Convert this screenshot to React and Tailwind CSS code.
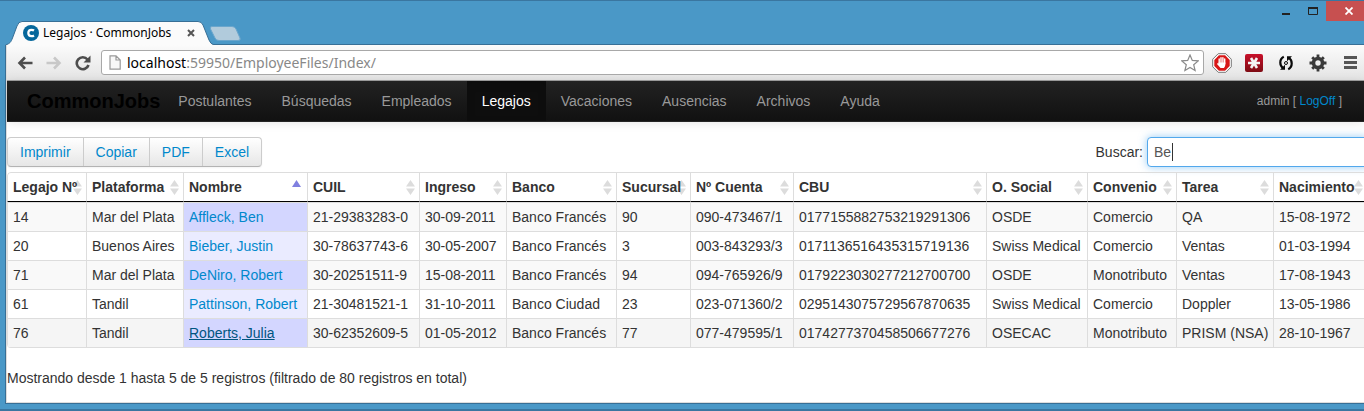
import { useState } from "react";

const columns = [
  { title: "Legajo Nº", width: "w-[79px]" },
  { title: "Plataforma", width: "w-[97px]" },
  { title: "Nombre", width: "w-[124px]", sorted: true },
  { title: "CUIL", width: "w-[112px]" },
  { title: "Ingreso", width: "w-[87px]" },
  { title: "Banco", width: "w-[110px]" },
  { title: "Sucursal", width: "w-[74px]" },
  { title: "Nº Cuenta", width: "w-[103px]" },
  { title: "CBU", width: "w-[193px]" },
  { title: "O. Social", width: "w-[101px]" },
  { title: "Convenio", width: "w-[89px]" },
  { title: "Tarea", width: "w-[97px]" },
  { title: "Nacimiento", width: "w-auto" },
];

const rows = [
  ["14", "Mar del Plata", "Affleck, Ben", "21-29383283-0", "30-09-2011", "Banco Francés", "90", "090-473467/1", "0177155882753219291306", "OSDE", "Comercio", "QA", "15-08-1972"],
  ["20", "Buenos Aires", "Bieber, Justin", "30-78637743-6", "30-05-2007", "Banco Francés", "3", "003-843293/3", "0171136516435315719136", "Swiss Medical", "Comercio", "Ventas", "01-03-1994"],
  ["71", "Mar del Plata", "DeNiro, Robert", "30-20251511-9", "15-08-2011", "Banco Francés", "94", "094-765926/9", "0179223030277212700700", "OSDE", "Monotributo", "Ventas", "17-08-1943"],
  ["61", "Tandil", "Pattinson, Robert", "21-30481521-1", "31-10-2011", "Banco Ciudad", "23", "023-071360/2", "0295143075729567870635", "Swiss Medical", "Comercio", "Doppler", "13-05-1986"],
  ["76", "Tandil", "Roberts, Julia", "30-62352609-5", "01-05-2012", "Banco Francés", "77", "077-479595/1", "0174277370458506677276", "OSECAC", "Monotributo", "PRISM (NSA)", "28-10-1967"],
];

const navItems = ["Postulantes", "Búsquedas", "Empleados", "Legajos", "Vacaciones", "Ausencias", "Archivos", "Ayuda"];

function TabStrip() {
  return (
    <div className="relative h-[45px] border-t border-[#3a76a0]">
      <div className="absolute bottom-0 left-[6px] right-0 h-px bg-[#376f96]" />
      <svg className="absolute left-0 top-[19px] h-[25px] w-[250px]" viewBox="0 0 250 25" aria-hidden="true">
        <path d="M5.500 25 C10 23.500 11 22 12.500 18 L17 6 Q18.500 1.500 22 1.500 H198 Q201.500 1.500 203 5 L209 20 Q210.500 24 214 25" fill="#fbfbfb" stroke="#376f96" />
        <path d="M212 6.500 H232 Q235 6.500 236 9 L240 18 Q241 20.500 238 20.500 H219 Q216 20.500 215 18 L210.500 9 Q209.500 6.500 212 6.500 Z" fill="#b1cbdc" stroke="#6ba6cc" />
      </svg>
      <div className="absolute left-[23px] top-[23px] flex h-[18px] w-44 items-center gap-1">
        <svg className="size-4 shrink-0" viewBox="0 0 16 16" aria-hidden="true">
          <circle cx="8" cy="8" r="8" fill="#05679b" />
          <path d="M11 5.500 Q10 4.800 8.500 4.800 Q5.300 4.800 5.300 8 Q5.300 11.200 8.500 11.200 Q10 11.200 11 10.500" fill="none" stroke="#fff" strokeWidth="2.200" />
        </svg>
        <span className="grow whitespace-nowrap font-['Noto_Sans',sans-serif] text-xs text-black">Legajos · CommonJobs</span>
        <button type="button" aria-label="Cerrar pestaña" className="mr-1">
          <svg className="size-2" viewBox="0 0 8 8" aria-hidden="true">
            <path d="M1 1 L7 7 M7 1 L1 7" stroke="#555" strokeWidth="2" />
          </svg>
        </button>
      </div>
      <div className="absolute right-0 top-0 flex h-5 items-center">
        <button type="button" aria-label="Minimizar" className="flex w-[27px] justify-center">
          <svg className="h-3 w-2" viewBox="0 0 8 12" aria-hidden="true"><path d="M0 9 H8" stroke="#222" strokeWidth="2" /></svg>
        </button>
        <button type="button" aria-label="Maximizar" className="flex w-[27px] justify-center">
          <svg className="h-2 w-[10px]" viewBox="0 0 10 8" aria-hidden="true"><path d="M0.500 0 V7.500 H9.500 V1" fill="none" stroke="#222" /><path d="M0 1 H10" stroke="#222" strokeWidth="2" /></svg>
        </button>
        <button type="button" aria-label="Cerrar" className="flex h-5 w-[38px] items-center bg-[#c75050] pl-[19px]">
          <svg className="size-2" viewBox="0 0 8 8" aria-hidden="true"><path d="M0.500 0.500 L7.500 7.500 M7.500 0.500 L0.500 7.500" stroke="#fff" strokeWidth="1.800" /></svg>
        </button>
      </div>
    </div>
  );
}

function Toolbar() {
  return (
    <div className="flex h-9 items-center border-b border-[#a0a0a0] bg-linear-to-b from-[#fbfbfb] to-[#e4e4e4] pl-[10px] pr-[7px]">
      <button type="button" aria-label="Atrás" className="mr-[13px]">
        <svg className="size-4" viewBox="0 0 16 16" aria-hidden="true"><path d="M8 2.500 L2.500 8 L8 13.500 M2.500 8 H15.500" fill="none" stroke="#4d4d4d" strokeWidth="2.600" /></svg>
      </button>
      <button type="button" aria-label="Adelante" className="mr-[13px]">
        <svg className="size-4" viewBox="0 0 16 16" aria-hidden="true"><path d="M8 2.500 L13.500 8 L8 13.500 M13.500 8 H0.500" fill="none" stroke="#c8c8c8" strokeWidth="2.600" /></svg>
      </button>
      <button type="button" aria-label="Recargar" className="mr-[10px]">
        <svg className="size-4" viewBox="0 0 16 16" aria-hidden="true">
          <path d="M12.500 4.500 A6 6 0 1 0 13.500 10" fill="none" stroke="#4d4d4d" strokeWidth="2.600" />
          <path d="M15.500 0.500 V7.500 H8.500 Z" fill="#4d4d4d" />
        </svg>
      </button>
      <div className="flex h-[25px] min-w-0 grow items-center rounded-[3px] border border-[#a8a8a8] bg-white pl-[7px] pr-1">
        <svg className="mr-[6px] h-[15px] w-3 shrink-0" viewBox="0 0 12 15" aria-hidden="true"><path d="M1 0.800 H7 L11.200 5 V14.200 H1 Z M7 0.800 V5 H11" fill="#f8f8f8" stroke="#999" strokeWidth="1.200" /></svg>
        <div className="min-w-0 grow whitespace-nowrap font-['Noto_Sans',sans-serif] text-sm leading-5 text-[#888]"><span className="text-black">localhost</span>:59950/EmployeeFiles/Index/</div>
        <button type="button" aria-label="Añadir a marcadores">
          <svg className="size-[18px]" viewBox="0 0 18 18" aria-hidden="true"><path d="M9 1 L11.300 6.400 L17.200 6.900 L12.700 10.700 L14.100 16.500 L9 13.400 L3.900 16.500 L5.300 10.700 L0.800 6.900 L6.700 6.400 Z" fill="#fff" stroke="#8a8a8a" strokeWidth="1.200" /></svg>
        </button>
      </div>
      <div className="ml-2 flex shrink-0 items-center gap-3">
        <button type="button" aria-label="Bloqueador">
          <svg className="size-5" viewBox="0 0 20 20" aria-hidden="true">
            <path d="M6.200 0.700 H13.800 L19.300 6.200 V13.800 L13.800 19.300 H6.200 L0.700 13.800 V6.200 Z" fill="#fff" stroke="#777" />
            <path d="M6.900 2.300 H13.100 L17.700 6.900 V13.100 L13.100 17.700 H6.900 L2.300 13.100 V6.900 Z" fill="#d81717" />
            <path d="M7.200 6 V11 M9 4.800 V10 M10.900 4.800 V10 M12.700 6 V11" stroke="#fff" strokeWidth="1.400" strokeLinecap="round" />
            <path d="M6.500 9.500 H13.400 Q13.600 13 12 15 H8.500 L5 11 Q5 9.800 6.500 10.800 Z" fill="#fff" />
          </svg>
        </button>
        <button type="button" aria-label="Contraseñas">
          <svg className="size-5" viewBox="0 0 20 20" aria-hidden="true">
            <defs>
              <linearGradient id="vault" x1="0" y1="0" x2="0" y2="1">
                <stop offset="0" stopColor="#c8102a" />
                <stop offset="1" stopColor="#7e0c14" />
              </linearGradient>
            </defs>
            <rect x="1" y="1" width="18" height="18" rx="2" fill="url(#vault)" />
            <path d="M4 10 H16 M7 5 L13 15 M13 5 L7 15" stroke="#f4f4f4" strokeWidth="2.600" />
          </svg>
        </button>
        <button type="button" aria-label="Sincronizar">
          <svg className="size-5" viewBox="0 0 20 20" aria-hidden="true">
            <path d="M7.800 3.800 Q4.300 5.500 4.300 9.500 Q4.300 13 6.800 14.800 M12.200 16.200 Q15.700 14.500 15.700 10.500 Q15.700 7 13.200 5.200" fill="none" stroke="#0a0a0a" strokeWidth="2.200" />
            <path d="M4 16.800 H9 V11.800 Z M16 3.200 H11 V8.200 Z" fill="#0a0a0a" />
            <circle cx="10" cy="10" r="1.500" fill="none" stroke="#0a0a0a" />
          </svg>
        </button>
        <button type="button" aria-label="Opciones">
          <svg className="size-5" viewBox="0 0 20 20" aria-hidden="true">
            <path d="M10 1.500 V5 M10 15 V18.500 M1.500 10 H5 M15 10 H18.500 M4.200 4.200 L6.500 6.500 M13.500 13.500 L15.800 15.800 M15.800 4.200 L13.500 6.500 M6.500 13.500 L4.200 15.800" stroke="#3a3a3a" strokeWidth="2.800" />
            <circle cx="10" cy="10" r="4.500" fill="none" stroke="#3a3a3a" strokeWidth="3.600" />
          </svg>
        </button>
        <button type="button" aria-label="Menú" className="ml-1">
          <svg className="h-[13px] w-[13px]" viewBox="0 0 13 13" aria-hidden="true"><path d="M0 1.500 H13 M0 6.500 H13 M0 11.500 H13" stroke="#555" strokeWidth="3" /></svg>
        </button>
      </div>
    </div>
  );
}

function NavBar() {
  return (
    <nav className="flex h-[41px] items-center border-b border-[#252525] bg-linear-to-b from-[#222] to-[#111] pl-5 text-sm text-[#999] shadow-[0_1px_10px_rgba(0,0,0,0.1)]">
      <a href="#inicio" className="mr-[3px] text-xl font-bold text-black">CommonJobs</a>
      <ul className="flex h-full grow">
        {navItems.map((item) => (
          <li key={item} className="h-full">
            <a href={"#" + item} className={item === "Legajos" ? "flex h-full items-center bg-[#0e0e0e] px-[15px] text-white shadow-[inset_0_3px_8px_rgba(0,0,0,0.125)]" : "flex h-full items-center px-[15px]"}>{item}</a>
          </li>
        ))}
      </ul>
      <div className="mr-[22px] text-xs">admin [ <a href="#logoff" className="text-[#0088cc]">LogOff</a> ]</div>
    </nav>
  );
}

function SortIcon({ sorted }) {
  return (
    <svg className={sorted ? "absolute right-[6px] top-[7px] h-[15px] w-[9px]" : "absolute right-1 top-[7px] h-[15px] w-[9px]"} viewBox="0 0 9 15" aria-hidden="true">
      {sorted ? <path d="M4.500 0 L9 7 H0 Z" fill="#8080e0" /> : <path d="M4.500 0 L9 6.500 H0 Z M0 8.500 H9 L4.500 15 Z" fill="#dcdcdc" />}
    </svg>
  );
}

function cellColor(row, col) {
  if (col === 2) return row % 2 === 0 ? "bg-[#d3d6ff]" : "bg-[#eaebff]";
  if (row === 4) return "bg-[#f5f5f5]";
  return row % 2 === 0 ? "bg-[#f9f9f9]" : "bg-white";
}

function EmployeeTable() {
  return (
    <table className="w-full table-fixed border-separate border-spacing-0 overflow-hidden rounded border border-l-0 border-t-0 border-[#ddd] text-left">
      <thead>
        <tr>
          {columns.map((c) => (
            <th key={c.title} className={c.width + " relative whitespace-nowrap border-b border-l border-t border-b-black border-l-[#ddd] border-t-[#ddd] px-[5px] py-1 first:rounded-tl"}>
              <SortIcon sorted={c.sorted} />
              <button type="button" className="relative block">{c.title}</button>
            </th>
          ))}
        </tr>
      </thead>
      <tbody>
        {rows.map((row, r) => (
          <tr key={row[0]}>
            {row.map((value, c) => (
              <td key={c} className={cellColor(r, c) + " whitespace-nowrap border-l border-t border-[#ddd] px-[5px] py-1"}>
                {c === 2 ? <a href={"#" + row[0]} className={r === 4 ? "text-[#005580] underline" : "text-[#0088cc]"}>{value}</a> : value}
              </td>
            ))}
          </tr>
        ))}
      </tbody>
    </table>
  );
}

function SearchBox() {
  const [query, setQuery] = useState("Be");
  return (
    <div className="flex items-center gap-1">
      <label htmlFor="search">Buscar:</label>
      <div className="relative">
        <input id="search" value={query} onChange={(e) => setQuery(e.target.value)} className="block h-[30px] w-[221px] rounded border border-[#52a8ec] bg-white px-[6px] text-[#555] caret-transparent shadow-[0_0_8px_rgba(82,168,236,0.6)] outline-none" />
        <span className="absolute top-[6px] h-[18px] w-px bg-[#333]" style={{ left: `calc(9px + ${query.length}ch)` }} />
      </div>
    </div>
  );
}

export default function App() {
  return (
    <div className="overflow-x-clip border-b-2 border-[#3a76a0] bg-[#4a98c7] font-['Liberation_Sans',Arial,sans-serif]">
      <TabStrip />
      <div className="mb-[5px] ml-[5px] border-b border-l border-[#376f96]">
        <div className="border-b border-l border-[#ddd] bg-white">
          <Toolbar />
          <NavBar />
          <main className="-mr-1 pb-[14px] pt-[15px] text-sm leading-5 text-[#333]">
            <div className="mb-[5px] flex items-center justify-between">
              <div className="flex h-[30px] divide-x divide-[#ccc] rounded border border-[#ccc] border-b-[#b3b3b3] bg-linear-to-b from-white to-[#e6e6e6] text-[#0088cc] shadow-xs">
                {["Imprimir", "Copiar", "PDF", "Excel"].map((label) => (
                  <button key={label} type="button" className="px-3">{label}</button>
                ))}
              </div>
              <SearchBox />
            </div>
            <EmployeeTable />
            <p className="mt-5">Mostrando desde 1 hasta 5 de 5 registros (filtrado de 80 registros en total)</p>
          </main>
        </div>
      </div>
    </div>
  );
}
